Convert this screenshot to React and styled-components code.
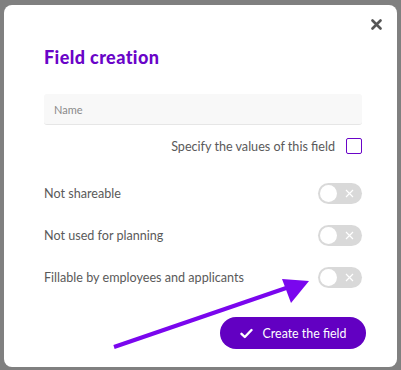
import React from "react"
import styled, { createGlobalStyle } from "styled-components"

const Global = createGlobalStyle`
  html, body {
    margin: 0;
    padding: 0;
    background: #808080;
    font-family: Lato, "Open Sans", sans-serif;
  }
`

const rows = [
  "Not shareable",
  "Not used for planning",
  "Fillable by employees and applicants",
]

export default function App() {
  return (
    <>
      <Global />
      <Page>
        <Modal>
          <Close aria-label="close">
            <svg width="11" height="11" viewBox="0 0 11 11">
              <path d="M1.5 1.5 L9.5 9.5 M9.5 1.5 L1.5 9.5" stroke="#555" strokeWidth="2.6" strokeLinecap="round" />
            </svg>
          </Close>
          <Title>Field creation</Title>
          <Input placeholder="Name" />
          <SpecifyRow>
            <SpecifyLabel>Specify the values of this field</SpecifyLabel>
            <Checkbox />
          </SpecifyRow>
          <Options>
            {rows.map((label) => (
              <OptionRow key={label}>
                <OptionLabel>{label}</OptionLabel>
                <Toggle>
                  <Knob />
                  <svg width="9" height="9" viewBox="0 0 9 9">
                    <path d="M1 1 L8 8 M8 1 L1 8" stroke="#fff" strokeWidth="1.2" />
                  </svg>
                </Toggle>
              </OptionRow>
            ))}
          </Options>
          <Footer>
            <Button>
              <svg width="13" height="11" viewBox="0 0 13 11">
                <path d="M1.5 5.8 L4.8 9 L11.5 2" stroke="#fff" strokeWidth="2.4" fill="none" strokeLinecap="round" strokeLinejoin="round" />
              </svg>
              Create the field
            </Button>
          </Footer>
          <Arrow width="401" height="370" viewBox="0 0 401 370">
            <line x1="114" y1="347" x2="292" y2="286" stroke="#7a06ee" strokeWidth="4" />
            <polygon points="309,281 282,279 291,303" fill="#7a06ee" />
          </Arrow>
        </Modal>
      </Page>
    </>
  )
}

const Page = styled.div`
  width: 401px;
  height: 370px;
  padding: 5px 4px 3px 4px;
  box-sizing: border-box;
  overflow: hidden;
`

const Modal = styled.div`
  position: relative;
  width: 393px;
  height: 362px;
  background: #fff;
  border-radius: 8px;
  box-sizing: border-box;
  padding: 42px 35px 0 40px;
  display: flex;
  flex-direction: column;
`

const Close = styled.div`
  position: absolute;
  top: 14px;
  right: 15px;
  width: 11px;
  height: 11px;
  display: flex;
`

const Title = styled.h2`
  margin: 0;
  font-size: 18px;
  font-weight: 900;
  color: #6a04c8;
  line-height: 20px;
  letter-spacing: 0.4px;
`

const Input = styled.input`
  margin-top: 27px;
  height: 31px;
  width: 318px;
  box-sizing: border-box;
  border: none;
  border-bottom: 1px solid #e6e6e6;
  border-radius: 3px;
  background: #f8f8f8;
  padding: 0 10px;
  font-family: Lato, sans-serif;
  font-size: 11px;
  outline: none;
  &::placeholder {
    color: #8a8a8a;
  }
`

const SpecifyRow = styled.div`
  margin-top: 13px;
  width: 318px;
  display: flex;
  justify-content: flex-end;
  align-items: center;
  gap: 11px;
`

const SpecifyLabel = styled.span`
  font-size: 12.6px;
  color: #5a5a5a;
`

const Checkbox = styled.span`
  width: 14px;
  height: 14px;
  border: 1px solid #6a04c8;
  border-radius: 2px;
`

const Options = styled.div`
  margin-top: 29px;
  width: 318px;
  display: flex;
  flex-direction: column;
  gap: 21px;
`

const OptionRow = styled.div`
  display: flex;
  justify-content: space-between;
  align-items: center;
  height: 21px;
`

const OptionLabel = styled.span`
  font-size: 12.6px;
  color: #5a5a5a;
`

const Toggle = styled.span`
  width: 44px;
  height: 21px;
  border-radius: 11px;
  background: #d9d9d9;
  box-sizing: border-box;
  padding: 2px 8px 2px 2px;
  display: flex;
  justify-content: space-between;
  align-items: center;
`

const Knob = styled.span`
  width: 17px;
  height: 17px;
  border-radius: 50%;
  background: #fff;
`

const Footer = styled.div`
  margin-top: 29px;
  width: 322px;
  display: flex;
  justify-content: flex-end;
`

const Button = styled.button`
  height: 32px;
  width: 146px;
  border: none;
  border-radius: 16px;
  background: #6200c2;
  color: #fff;
  font-family: Lato, sans-serif;
  font-size: 12.4px;
  display: flex;
  align-items: center;
  justify-content: center;
  gap: 10px;
  padding: 0;
`

const Arrow = styled.svg`
  position: absolute;
  left: -4px;
  top: -5px;
  pointer-events: none;
`
